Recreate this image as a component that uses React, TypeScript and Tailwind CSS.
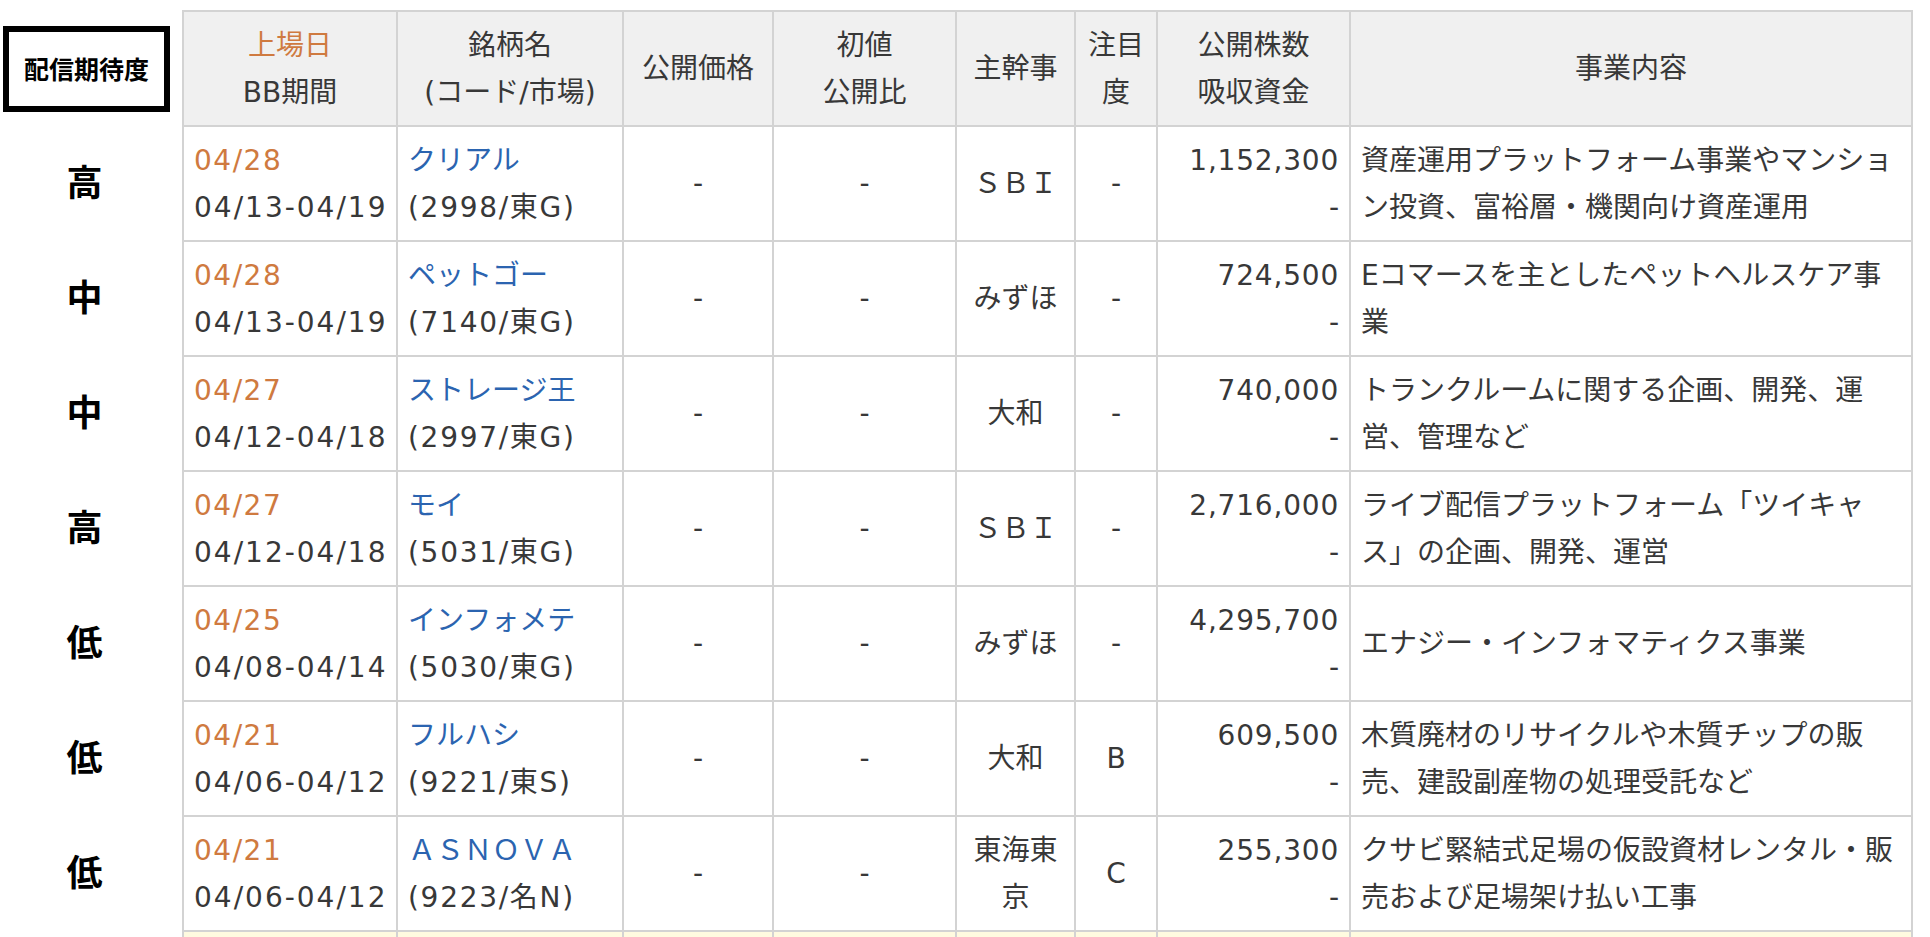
type Ipo = {
  rating: string
  listDate: string
  bbPeriod: string
  name: string
  code: string
  underwriter: string[]
  attention: string
  shares: string
  business: string[]
}

const ipos: Ipo[] = [
  {
    rating: '高',
    listDate: '04/28',
    bbPeriod: '04/13-04/19',
    name: 'クリアル',
    code: '(2998/東G)',
    underwriter: ['ＳＢＩ'],
    attention: '-',
    shares: '1,152,300',
    business: ['資産運用プラットフォーム事業やマンショ', 'ン投資、富裕層・機関向け資産運用'],
  },
  {
    rating: '中',
    listDate: '04/28',
    bbPeriod: '04/13-04/19',
    name: 'ペットゴー',
    code: '(7140/東G)',
    underwriter: ['みずほ'],
    attention: '-',
    shares: '724,500',
    business: ['Eコマースを主としたペットヘルスケア事', '業'],
  },
  {
    rating: '中',
    listDate: '04/27',
    bbPeriod: '04/12-04/18',
    name: 'ストレージ王',
    code: '(2997/東G)',
    underwriter: ['大和'],
    attention: '-',
    shares: '740,000',
    business: ['トランクルームに関する企画、開発、運', '営、管理など'],
  },
  {
    rating: '高',
    listDate: '04/27',
    bbPeriod: '04/12-04/18',
    name: 'モイ',
    code: '(5031/東G)',
    underwriter: ['ＳＢＩ'],
    attention: '-',
    shares: '2,716,000',
    business: ['ライブ配信プラットフォーム「ツイキャ', 'ス」の企画、開発、運営'],
  },
  {
    rating: '低',
    listDate: '04/25',
    bbPeriod: '04/08-04/14',
    name: 'インフォメテ',
    code: '(5030/東G)',
    underwriter: ['みずほ'],
    attention: '-',
    shares: '4,295,700',
    business: ['エナジー・インフォマティクス事業'],
  },
  {
    rating: '低',
    listDate: '04/21',
    bbPeriod: '04/06-04/12',
    name: 'フルハシ',
    code: '(9221/東S)',
    underwriter: ['大和'],
    attention: 'B',
    shares: '609,500',
    business: ['木質廃材のリサイクルや木質チップの販', '売、建設副産物の処理受託など'],
  },
  {
    rating: '低',
    listDate: '04/21',
    bbPeriod: '04/06-04/12',
    name: 'ＡＳＮＯＶＡ',
    code: '(9223/名N)',
    underwriter: ['東海東', '京'],
    attention: 'C',
    shares: '255,300',
    business: ['クサビ緊結式足場の仮設資材レンタル・販', '売および足場架け払い工事'],
  },
]

const cell = 'border-2 border-[#d3d3d3] px-[10px] align-middle whitespace-nowrap'
const head = `${cell} bg-[#f0f0f0] font-normal text-center`

function Lines({ lines }: { lines: string[] }) {
  return (
    <>
      {lines.map((line, i) => (
        <div key={i}>{line}</div>
      ))}
    </>
  )
}

function IpoRow({ ipo }: { ipo: Ipo }) {
  return (
    <tr className="h-[115px]">
      <td className="w-[183px] pr-[13px] text-center align-middle text-[36px] font-bold text-black">
        {ipo.rating}
      </td>
      <td className={`${cell} bg-white`}>
        <div className="tracking-[1.5px] text-[#cf7a40]">{ipo.listDate}</div>
        <div className="tracking-[2px]">{ipo.bbPeriod}</div>
      </td>
      <td className={`${cell} bg-white`}>
        <div className="text-[#2b64b0]">{ipo.name}</div>
        <div className="tracking-[1.7px]">{ipo.code}</div>
      </td>
      <td className={`${cell} bg-white text-center`}>-</td>
      <td className={`${cell} bg-white text-center`}>-</td>
      <td className={`${cell} bg-white text-center`}>
        <Lines lines={ipo.underwriter} />
      </td>
      <td className={`${cell} bg-white text-center`}>{ipo.attention}</td>
      <td className={`${cell} bg-white text-right`}>
        <div className="tracking-[0.8px]">{ipo.shares}</div>
        <div>-</div>
      </td>
      <td className={`${cell} bg-white`}>
        <Lines lines={ipo.business} />
      </td>
    </tr>
  )
}

export default function App() {
  return (
    <div
      className="min-h-screen bg-white pt-[10px] text-[28px] leading-[47px] text-[#383838]"
      style={{ fontFamily: '"DejaVu Sans", "Noto Sans CJK JP", sans-serif' }}
    >
      <table className="table-fixed border-collapse w-[1912px]">
        <colgroup>
          <col className="w-[183px]" />
          <col className="w-[214px]" />
          <col className="w-[226px]" />
          <col className="w-[150px]" />
          <col className="w-[183px]" />
          <col className="w-[119px]" />
          <col className="w-[82px]" />
          <col className="w-[193px]" />
          <col className="w-[562px]" />
        </colgroup>
        <thead>
          <tr className="h-[115px]">
            <th className="pr-[13px] align-middle font-normal">
              <div
                className="ml-[3px] flex h-[86px] w-[167px] items-center justify-center border-[6px] border-black text-[25px] font-bold leading-none text-black"
                style={{ fontFamily: '"Noto Sans CJK JP", sans-serif' }}
              >
                配信期待度
              </div>
            </th>
            <th className={head}>
              <div className="text-[#cf7a40]">上場日</div>
              <div>BB期間</div>
            </th>
            <th className={head}>
              <div>銘柄名</div>
              <div>(コード/市場)</div>
            </th>
            <th className={head}>公開価格</th>
            <th className={head}>
              <div>初値</div>
              <div>公開比</div>
            </th>
            <th className={head}>主幹事</th>
            <th className={`${head} px-0`}>
              <div>注目</div>
              <div>度</div>
            </th>
            <th className={head}>
              <div>公開株数</div>
              <div>吸収資金</div>
            </th>
            <th className={head}>事業内容</th>
          </tr>
        </thead>
        <tbody>
          {ipos.map((ipo, i) => (
            <IpoRow key={i} ipo={ipo} />
          ))}
          <tr className="h-[115px]">
            <td />
            <td className={`${cell} bg-[#fffbe0]`} />
            <td className={`${cell} bg-[#fffbe0]`} />
            <td className={`${cell} bg-[#fffbe0]`} />
            <td className={`${cell} bg-[#fffbe0]`} />
            <td className={`${cell} bg-[#fffbe0]`} />
            <td className={`${cell} bg-[#fffbe0]`} />
            <td className={`${cell} bg-[#fffbe0]`} />
            <td className={`${cell} bg-[#fffbe0]`} />
          </tr>
        </tbody>
      </table>
    </div>
  )
}
